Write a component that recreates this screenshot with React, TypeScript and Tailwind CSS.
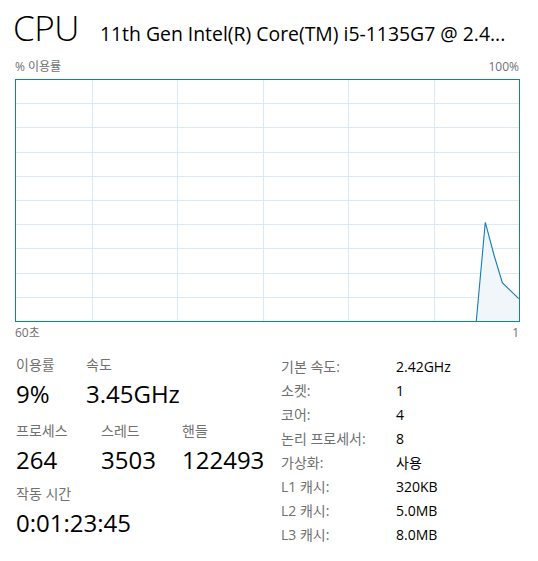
import React from "react";

const FONT = { fontFamily: '"Segoe UI", "Open Sans", "Noto Sans CJK KR", sans-serif' };

function Graph() {
  const w = 505;
  const h = 243;
  const hs = Array.from({ length: 9 }, (_, i) => 0.5 + Math.round((i + 1) * 24.2));
  const vs = [77.5, 162.5, 248.5, 333.5, 419.5];
  const pts = "461.3,242 470.3,143.3 479,176 487.3,203.7 503.7,219.7";
  return (
    <svg width={w} height={h} className="block">
      <rect x={0} y={0} width={w} height={h} fill="#ffffff" />
      {hs.map((y) => (
        <line key={"h" + y} x1={0} x2={w} y1={y} y2={y} stroke="#d9eaf4" strokeWidth={1} />
      ))}
      {vs.map((x) => (
        <line key={"v" + x} x1={x} x2={x} y1={0} y2={h} stroke="#d9eaf4" strokeWidth={1} />
      ))}
      <polygon points={`461.3,242 ${pts} 504,242`} fill="#f1f6fa" />
      <polyline points={pts} fill="none" stroke="#117dbb" strokeWidth={1.1} />
      <rect x={0.5} y={0.5} width={w - 1} height={h - 1} fill="none" stroke="#117dbb" strokeWidth={1} />
    </svg>
  );
}

function Stat({ label, value, className }: { label: string; value: string; className?: string }) {
  return (
    <div className={className}>
      <div className="text-[14px] leading-[18px] text-[#707070]">{label}</div>
      <div className="text-[24px] leading-[30px] text-black mt-[5px]">{value}</div>
    </div>
  );
}

const rows: [string, string][] = [
  ["기본 속도:", "2.42GHz"],
  ["소켓:", "1"],
  ["코어:", "4"],
  ["논리 프로세서:", "8"],
  ["가상화:", "사용"],
  ["L1 캐시:", "320KB"],
  ["L2 캐시:", "5.0MB"],
  ["L3 캐시:", "8.0MB"],
];

export default function App() {
  return (
    <div className="w-[538px] h-[561px] bg-white overflow-hidden" style={FONT}>
      <div className="pl-[15px] pr-[19px]">
        <div className="flex items-baseline h-[57px] pt-[6px]">
          <div className="text-[35px] font-light leading-[44px] text-black tracking-[-0.5px] ml-[-2px]">CPU</div>
          <div className="ml-[21px] text-[19.4px] leading-[24px] text-black whitespace-nowrap">
            11th Gen Intel(R) Core(TM) i5-1135G7 @ 2.4...
          </div>
        </div>
        <div className="flex justify-between text-[12px] leading-[16px] text-[#707070] h-[22px] pt-[2px]">
          <span>% 이용률</span>
          <span>100%</span>
        </div>
        <Graph />
        <div className="flex justify-between text-[12px] leading-[16px] text-[#707070] pt-[3px]">
          <span>60초</span>
          <span>1</span>
        </div>
      </div>
      <div className="flex pl-[16px] mt-[15px]">
        <div className="w-[265px]">
          <div className="flex">
            <Stat label="이용률" value="9%" className="w-[70px]" />
            <Stat label="속도" value="3.45GHz" />
          </div>
          <div className="flex mt-[13px]">
            <Stat label="프로세스" value="264" className="w-[85px]" />
            <Stat label="스레드" value="3503" className="w-[81px]" />
            <Stat label="핸들" value="122493" />
          </div>
          <Stat label="작동 시간" value="0:01:23:45" className="mt-[10px]" />
        </div>
        <div className="flex flex-col text-[14px] leading-[24px] -mt-[1px]">
          {rows.map(([k, v]) => (
            <div key={k} className="flex">
              <span className="w-[115px] text-[#707070]">{k}</span>
              <span className="text-black">{v}</span>
            </div>
          ))}
        </div>
      </div>
    </div>
  );
}
